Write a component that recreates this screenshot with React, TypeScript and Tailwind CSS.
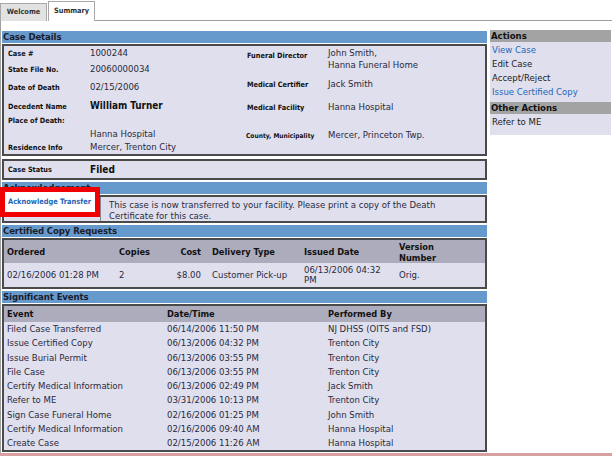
import React from "react";

const events = [
  ["Filed Case Transferred", "06/14/2006 11:50 PM", "NJ DHSS (OITS and FSD)"],
  ["Issue Certified Copy", "06/13/2006 04:32 PM", "Trenton City"],
  ["Issue Burial Permit", "06/13/2006 03:55 PM", "Trenton City"],
  ["File Case", "06/13/2006 03:55 PM", "Trenton City"],
  ["Certify Medical Information", "06/13/2006 02:49 PM", "Jack Smith"],
  ["Refer to ME", "03/31/2006 10:13 PM", "Trenton City"],
  ["Sign Case Funeral Home", "02/16/2006 01:25 PM", "John Smith"],
  ["Certify Medical Information", "02/16/2006 09:40 AM", "Hanna Hospital"],
  ["Create Case", "02/15/2006 11:26 AM", "Hanna Hospital"],
];

function SectionHeader({ title }: { title: string }) {
  return (
    <div className="h-[12px] bg-[#6699cc] pl-[1px] text-[9.5px] leading-[12px] font-bold tracking-[-0.1px] text-[#1c1c2c]">
      {title}
    </div>
  );
}

function Label({ children }: { children: React.ReactNode }) {
  return <span className="text-[7.3px] font-bold text-[#111]">{children}</span>;
}

export default function App() {
  return (
    <div className="w-[612px] h-[456px] bg-white overflow-hidden relative font-['DejaVu_Sans_Condensed','DejaVu_Sans',sans-serif] text-[9.5px] text-[#2a2a3a]">
      {/* tabs */}
      <div className="flex items-end h-[21px]">
        <div className="w-[47px] h-[18px] bg-[#e2e2e2] border border-b-0 border-[#a8a8a8] flex items-center justify-center text-[7.3px] font-bold text-[#333]">
          Welcome
        </div>
        <div className="ml-[1px] w-[47px] h-[20px] bg-white border border-b-0 border-[#a8a8a8] flex items-center justify-center text-[7.3px] font-bold text-[#333]">
          Summary
        </div>
        <div className="flex-1 border-b border-[#a0a0a0]" />
      </div>

      <div className="flex border-l border-[#a0a0a0] h-[435px]">
        {/* left column */}
        <div className="w-[485px] ml-[1px] pt-[10px]">
          <SectionHeader title="Case Details" />
          <div className="mt-[1px] border-2 border-[#4a4a4a] bg-[#dfdfee] flex h-[112px]">
            <div className="w-[243px] flex flex-col">
              {[
                ["Case #", "1000244", 15],
                ["State File No.", "20060000034", 16],
                ["Date of Death", "02/15/2006", 22],
                ["Decedent Name", "William Turner", 16],
                ["Place of Death:", "", 13],
                ["", "Hanna Hospital", 14],
                ["Residence Info", "Mercer, Trenton City", 13],
              ].map(([l, v, h], i) => (
                <div key={i} className="flex items-center" style={{ height: h as number }}>
                  <div className="w-[86px] pl-[4px]">
                    <Label>{l}</Label>
                  </div>
                  {l === "Decedent Name" ? (
                    <span className="text-[9.9px] font-bold text-[#111]">{v}</span>
                  ) : (
                    <span>{v}</span>
                  )}
                </div>
              ))}
            </div>
            <div className="flex-1 flex flex-col">
              <div className="flex items-start h-[27px]">
                <div className="w-[81px] pt-[4px] leading-[10px]">
                  <Label>Funeral Director</Label>
                </div>
                <div className="pt-[1px] leading-[11.5px]">
                  John Smith,
                  <br />
                  Hanna Funeral Home
                </div>
              </div>
              <div className="flex items-center h-[22px]">
                <div className="w-[81px]">
                  <Label>Medical Certifier</Label>
                </div>
                <span>Jack Smith</span>
              </div>
              <div className="flex items-center h-[25px]">
                <div className="w-[81px]">
                  <Label>Medical Facility</Label>
                </div>
                <span>Hanna Hospital</span>
              </div>
              <div className="flex items-center h-[30px]">
                <div className="w-[82px] -ml-[1px]">
                  <span className="text-[6.6px] font-bold text-[#111]">County, Municipality</span>
                </div>
                <span>Mercer, Princeton Twp.</span>
              </div>
            </div>
          </div>

          <div className="mt-[3px] border-2 border-[#4a4a4a] bg-[#dfdfee] h-[21px] flex items-center">
            <div className="w-[86px] pl-[4px]">
              <Label>Case Status</Label>
            </div>
            <span className="text-[10px] font-bold text-[#111]">Filed</span>
          </div>

          <div className="mt-[2px]">
            <SectionHeader title="Acknowledgement" />
          </div>
          <div className="mt-[1px] border-2 border-[#4a4a4a] bg-[#dfdfee] h-[28px] flex">
            <div className="w-[97px] border-r border-[#888]" />
            <div className="pl-[8px] pt-[2px] leading-[11px]">
              This case is now transferred to your facility. Please print a copy of the Death
              <br />
              Certificate for this case.
            </div>
          </div>

          <div className="mt-[2px]">
            <SectionHeader title="Certified Copy Requests" />
          </div>
          <div className="mt-[1px] border-2 border-[#4a4a4a] bg-[#dfdfee]">
            <div className="h-[23px] bg-[#acacbc] flex items-center font-bold text-[9.2px] text-[#111] leading-[11px]">
              <div className="w-[115px] pl-[3px]">Ordered</div>
              <div className="w-[50px]">Copies</div>
              <div className="w-[32px] text-right">Cost</div>
              <div className="w-[103px] pl-[11px]">Delivery Type</div>
              <div className="w-[95px]">Issued Date</div>
              <div>
                Version
                <br />
                Number
              </div>
            </div>
            <div className="h-[24px] flex items-center leading-[10px]">
              <div className="w-[115px] pl-[3px]">02/16/2006 01:28 PM</div>
              <div className="w-[50px]">2</div>
              <div className="w-[32px] text-right">$8.00</div>
              <div className="w-[103px] pl-[11px]">Customer Pick-up</div>
              <div className="w-[95px]">
                06/13/2006 04:32
                <br />
                PM
              </div>
              <div>Orig.</div>
            </div>
          </div>

          <div className="mt-[2px]">
            <SectionHeader title="Significant Events" />
          </div>
          <div className="mt-[1px] border-2 border-[#4a4a4a] bg-[#dfdfee]">
            <div className="h-[16px] bg-[#acacbc] flex items-center font-bold text-[9.2px] text-[#111]">
              <div className="w-[163px] pl-[3px]">Event</div>
              <div className="w-[161px]">Date/Time</div>
              <div>Performed By</div>
            </div>
            {events.map(([e, d, p], i) => (
              <div key={i} className="h-[14.25px] flex items-center">
                <div className="w-[163px] pl-[3px]">{e}</div>
                <div className="w-[161px]">{d}</div>
                <div>{p}</div>
              </div>
            ))}
          </div>
        </div>

        {/* right column */}
        <div className="w-[121px] ml-[3px] pt-[9px]">
          <div className="bg-[#dfdfee] pb-[6px]">
            <div className="h-[12px] bg-[#a3a3a3] pl-[1px] text-[9.5px] leading-[12px] font-bold text-[#111]">
              Actions
            </div>
            <div className="pl-[2px] pt-[1px] leading-[14px]">
              <div className="text-[#2266b8]">View Case</div>
              <div className="text-[#222]">Edit Case</div>
              <div className="text-[#222]">Accept/Reject</div>
              <div className="text-[#2266b8]">Issue Certified Copy</div>
            </div>
            <div className="mt-[3px] h-[12px] bg-[#a3a3a3] pl-[1px] text-[9.5px] leading-[12px] font-bold text-[#111]">
              Other Actions
            </div>
            <div className="pl-[2px] pt-[1px] leading-[14px] text-[#222]">Refer to ME</div>
          </div>
        </div>
      </div>

      {/* annotation box */}
      <div className="absolute left-0 top-[187px] w-[100px] h-[30px] border-[5px] border-[#f00000] bg-white flex items-center pl-[3px]">
        <span className="text-[7.4px] font-bold text-[#2266b8]">Acknowledge Transfer</span>
      </div>
      <div className="absolute left-0 right-0 top-[453px] h-[3px] bg-[#d8a0a0]" />
    </div>
  );
}
